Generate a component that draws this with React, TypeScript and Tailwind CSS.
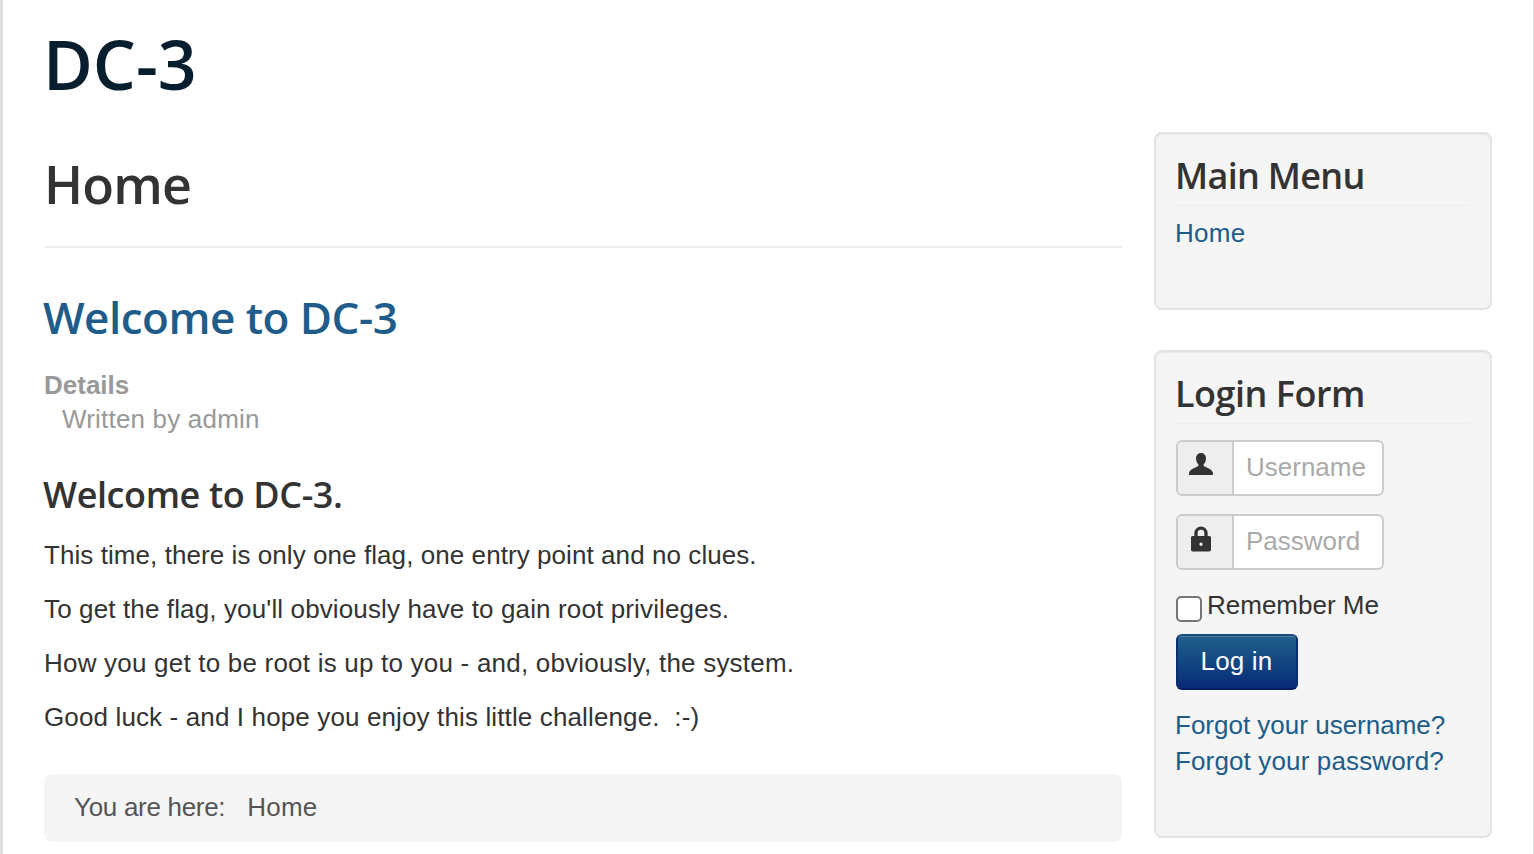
import { useState } from 'react';

const sans = "font-['Liberation_Sans',Arial,sans-serif]";
const heading = "font-['Open_Sans','Noto_Sans',sans-serif]";

const App = () => {
  const [remember, setRemember] = useState(false);

  return (
    <div className={`${sans} h-[854px] w-[1534px] overflow-hidden border-l-[3px] border-r-[1px] border-[#dddddd] bg-white text-[26px] leading-[36px] text-[#333333]`}>
      <div className="pl-[41px] pr-[41px] pt-[24px]">
        <h1 className={`${heading} h-[108px] indent-[-1px] text-[68px] font-semibold leading-[80px] text-[#071e2e]`}>DC-3</h1>
        <div className="flex gap-[32px]">
          <main className="w-[1078px] shrink-0">
            <h2 className={`${heading} mt-[22px] border-b-2 border-[#eeeeee] pb-[32px] text-[52px] font-semibold leading-[60px] tracking-[-0.8px]`}>Home</h2>
            <h3 className={`${heading} mt-[41px] indent-[-1px] text-[44px] font-semibold leading-[56px] tracking-[-0.5px] text-[#205c8a]`}>Welcome to DC-3</h3>
            <dl className="mt-[23px] text-[26px] leading-[34px] text-[#999999]">
              <dt className="font-bold">Details</dt>
              <dd className="pl-[18px] tracking-[0.19px]">Written by admin</dd>
            </dl>
            <h4 className={`${heading} mt-[36px] indent-[-1px] text-[36px] font-semibold leading-[46px] tracking-[-0.4px]`}>Welcome to DC-3.</h4>
            <div className="mt-[19px] flex flex-col gap-[18px]">
              <p className="tracking-[0.07px]">This time, there is only one flag, one entry point and no clues.</p>
              <p className="tracking-[0.13px]">To get the flag, you'll obviously have to gain root privileges.</p>
              <p className="tracking-[0.21px]">How you get to be root is up to you - and, obviously, the system.</p>
              <p className="whitespace-pre tracking-[0.13px]">Good luck - and I hope you enjoy this little challenge.  :-)</p>
            </div>
            <div className="mt-[39px] flex h-[68px] items-center gap-[22px] rounded-lg bg-[#f5f5f5] px-[30px] pb-[2px] text-[#555555]">
              <span className="tracking-[-0.3px]">You are here:</span>
              <a href="#" className="tracking-[0.2px]">Home</a>
            </div>
          </main>
          <aside className="flex w-[338px] shrink-0 flex-col gap-[40px]">
            <section className="h-[178px] rounded-lg border-2 border-[#e3e3e3] bg-[#f5f5f5] px-[20px] pt-[19px] shadow-[inset_0_1px_1px_rgba(0,0,0,0.05)]">
              <h3 className={`${heading} border-b border-[#eeeeee] pb-[6px] indent-[-1px] text-[36px] font-semibold leading-[46px] tracking-[-0.7px]`}>Main Menu</h3>
              <a href="#" className="mt-[9px] -ml-[1px] block tracking-[0.3px] text-[#205c8a]">Home</a>
            </section>
            <section className="h-[488px] rounded-lg border-2 border-[#e3e3e3] bg-[#f5f5f5] px-[20px] pt-[19px] shadow-[inset_0_1px_1px_rgba(0,0,0,0.05)]">
              <h3 className={`${heading} border-b border-[#eeeeee] pb-[6px] indent-[-1px] text-[36px] font-semibold leading-[46px] tracking-[-0.5px]`}>Login Form</h3>
              <div className="mt-[16px] flex h-[56px] w-[208px] overflow-hidden rounded-md border-2 border-[#cccccc] bg-white">
                <span className="flex w-[56px] items-center border-r-2 border-[#cccccc] bg-[#eeeeee] pb-[6px] pl-[11px]">
                  <svg width="24" height="24" viewBox="0 0 24 24" fill="#333333"><path d="M12 0c-3.300 0-5 2.500-5 5.500 0 2.300 1 4.500 2.300 5.700.4.900 0 1.800-.8 2.200C5.500 15 .5 16 0 20.500c0 .5 0 1.500 0 1.500h24s0-1 0-1.500C23.500 16 18.500 15 15.500 13.400c-.8-.4-1.200-1.300-.8-2.200C16 10 17 7.800 17 5.500 17 2.500 15.300 0 12 0z" /></svg>
                </span>
                <span className="flex flex-1 items-center pb-[2px] pl-[12px] text-[#aaaaaa]">Username</span>
              </div>
              <div className="mt-[18px] flex h-[56px] w-[208px] overflow-hidden rounded-md border-2 border-[#cccccc] bg-white">
                <span className="flex w-[56px] items-center border-r-2 border-[#cccccc] bg-[#eeeeee] pb-[6px] pl-[13px]">
                  <svg width="20" height="26" viewBox="3 1.500 18 22.500" fill="#333333"><path fillRule="evenodd" d="M6 10V7.500a6 6 0 0 1 12 0V10h1.500c.8 0 1.500.7 1.500 1.500v11c0 .8-.7 1.500-1.500 1.500h-15C3.700 24 3 23.300 3 22.500v-11C3 10.700 3.700 10 4.500 10zm3 0h6V7.500a3 3 0 0 0-6 0zm3 6a1.500 1.500 0 1 0 0 3 1.500 1.500 0 0 0 0-3z" /></svg>
                </span>
                <span className="flex flex-1 items-center pb-[2px] pl-[12px] text-[#aaaaaa]">Password</span>
              </div>
              <label className="mt-[17px] flex h-[36px] items-center gap-[5px]">
                <input
                  type="checkbox"
                  checked={remember}
                  onChange={(e) => setRemember(e.target.checked)}
                  className="mt-[8px] h-[26px] w-[26px] appearance-none rounded-[5px] border-2 border-[#767676] bg-white"
                />
                <span>Remember Me</span>
              </label>
              <button className="mt-[11px] block h-[56px] w-[122px] rounded-md border-2 border-b-[#051c5e] border-l-[#0a2f6e] border-r-[#0a2f6e] border-t-[#1a4c80] bg-gradient-to-b from-[#22608c] to-[#0a2a78] pb-[2px] pr-[1px] tracking-[0.2px] text-white shadow-[inset_0_1px_0_rgba(255,255,255,0.2)]">Log in</button>
              <a href="#" className="mt-[17px] -ml-[1px] block text-[#205c8a]">Forgot your username?</a>
              <a href="#" className="-ml-[1px] block tracking-[0.14px] text-[#205c8a]">Forgot your password?</a>
            </section>
          </aside>
        </div>
      </div>
    </div>
  );
};

export default App;
